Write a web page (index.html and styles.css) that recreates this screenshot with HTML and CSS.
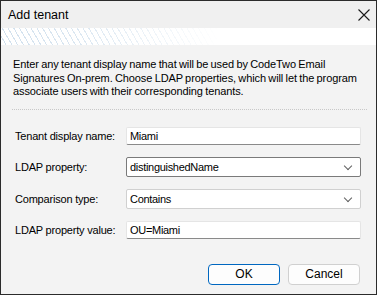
FILE: index.html
```html
<!DOCTYPE html>
<html lang="en">
<head>
  <meta charset="UTF-8" />
  <title>Add tenant</title>
  <link rel="stylesheet" href="styles.css">
</head>
<body>
  <div class="dialog">
    <div class="titlebar">
      <span class="title">Add tenant</span>
      <svg class="close" width="12" height="12" viewBox="0 0 12 12">
        <path d="M0.5 0.5 L11.5 11.5 M11.5 0.5 L0.5 11.5" stroke="#1a1a1a" stroke-width="1.1" fill="none" />
      </svg>
    </div>
    <div class="banner"></div>

    <div class="content">
      <p class="intro">Enter any tenant display name that will be used by CodeTwo Email Signatures On-prem. Choose LDAP properties, which will let the program associate users with their corresponding tenants.</p>
      <div class="separator"></div>

      <div class="form">
        <div class="row">
          <label>Tenant display name:</label>
          <div class="field text">Miami</div>
        </div>
        <div class="row">
          <label>LDAP property:</label>
          <div class="field combo focused">distinguishedName<span class="chevron"></span></div>
        </div>
        <div class="row">
          <label>Comparison type:</label>
          <div class="field combo">Contains<span class="chevron"></span></div>
        </div>
        <div class="row">
          <label>LDAP property value:</label>
          <div class="field text">OU=Miami</div>
        </div>
      </div>

      <div class="buttons">
        <button class="btn default">OK</button>
        <button class="btn">Cancel</button>
      </div>
    </div>
  </div>
</body>
</html>
```

FILE: styles.css
```css
body {
  margin: 0;
  font-family: 'Liberation Sans', Arial, sans-serif;
  font-size: 12px;
  color: #000;
  background: #fff;
}

.dialog {
  width: 375px;
  height: 293px;
  border: 1px solid #2b2b2b;
  background: #f3f3f3;
  display: flex;
  flex-direction: column;
  overflow: hidden;
}

.titlebar {
  flex-shrink: 0;
  height: 27px;
  background: #f0f0f0;
  display: flex;
  align-items: center;
  justify-content: space-between;
  padding: 0 6px 0 7px;
}

.title {
  font-size: 12.5px;
  margin-top: 1px;
}

.banner {
  flex-shrink: 0;
  height: 17px;
  background-color: #fff;
  background-image: linear-gradient(90deg, rgba(255,255,255,0) 0, rgba(255,255,255,0.2) 20%, #fff 58%),
    repeating-linear-gradient(60deg, #fff 0 4px, #d2e1ee 4px 5px);
}

.content {
  padding: 0 10px 0 12px;
  flex: 1;
}

.intro {
  margin: 13px 0 0;
  line-height: 13.5px;
  font-size: 11px;
  letter-spacing: -0.1px;
  word-spacing: -0.6px;
}

.separator {
  margin: 10px -1px 0 -1px;
  border-top: 1px dotted #c8c8c8;
}

.form {
  margin-top: 17px;
  display: flex;
  flex-direction: column;
  gap: 12px;
}

.row {
  display: flex;
  align-items: center;
  padding-left: 2px;
}

.row label {
  width: 111px;
  flex-shrink: 0;
  white-space: nowrap;
  font-size: 11px;
  letter-spacing: -0.2px;
}

.field {
  width: 235px;
  flex-shrink: 0;
  box-sizing: border-box;
  background: #fff;
  padding-left: 3px;
  font-size: 11px;
  letter-spacing: -0.3px;
  display: flex;
  align-items: center;
  position: relative;
}

.text {
  height: 18px;
  border: 1px solid #e5e5e5;
  border-bottom-color: #8a8a8a;
  border-radius: 2px;
}

.combo {
  height: 20px;
  border: 1px solid #d0d0d0;
  border-radius: 2px;
}

.combo.focused {
  border-color: #7a7a7a;
}

.chevron {
  position: absolute;
  right: 9px;
  top: 5px;
  width: 5px;
  height: 5px;
  border-right: 1px solid #606060;
  border-bottom: 1px solid #606060;
  transform: rotate(45deg);
}

.buttons {
  display: flex;
  justify-content: flex-end;
  gap: 8px;
  margin-top: 25px;
  padding-right: 6px;
}

.btn {
  width: 72px;
  height: 21px;
  font-family: 'Liberation Sans', Arial, sans-serif;
  font-size: 12px;
  background: #fdfdfd;
  border: 1px solid #d0d0d0;
  border-radius: 4px;
  padding: 0;
  color: #000;
}

.btn.default {
  border: 1px solid #0067c0;
}
```
